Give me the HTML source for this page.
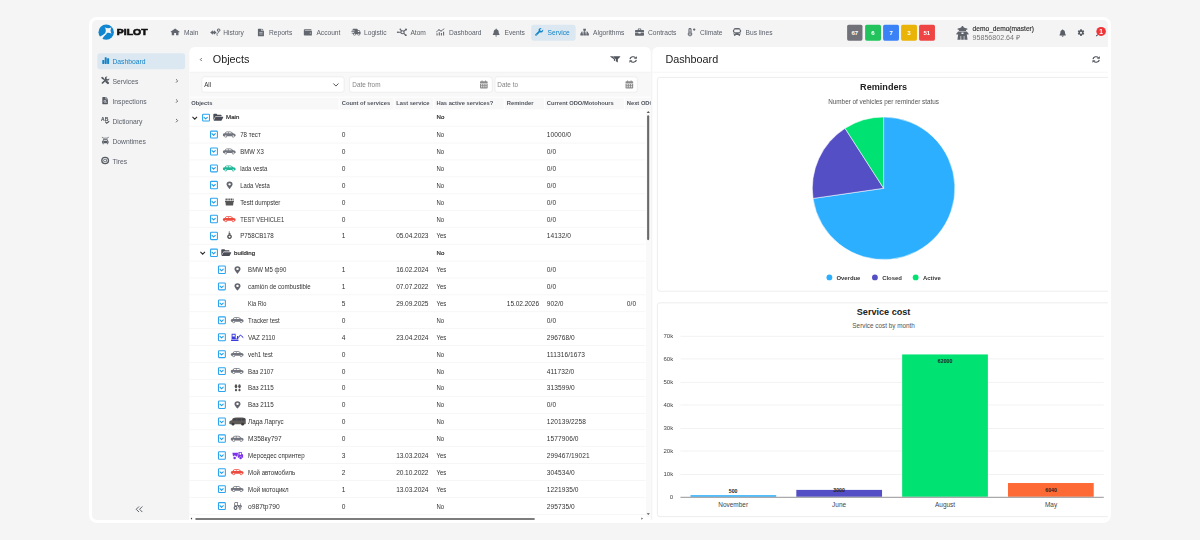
<!DOCTYPE html>
<html lang="en"><head><meta charset="utf-8"><title>PILOT - Service</title>
<style>
html,body{margin:0;padding:0}
body{width:1200px;height:540px;overflow:hidden;position:relative;background:#f5f5f5;font-family:"Liberation Sans",sans-serif;color:#333}
#frame{position:absolute;left:89px;top:17px;width:1022px;height:506px;background:#fff;border-radius:8px}
#inner{position:absolute;left:92px;top:20px;width:1016px;height:500px;background:#f4f4f4;border-radius:5px;overflow:hidden}
#app{position:relative;width:1920px;height:944px;transform:scale(0.529167);transform-origin:0 0}
.a{position:absolute}
.t{position:absolute;white-space:nowrap;line-height:1}
svg{position:absolute;overflow:visible}
.nav{font-size:12.55px;color:#555b66}
.side{font-size:12.8px;color:#5a5f69}
.panel{position:absolute;background:#fff;border-radius:10px 10px 0 0}
.ttl{font-size:20.4px;color:#222}
.hd{font-size:10.9px;font-weight:bold;color:#50555d}
.c{font-size:12.4px;color:#333}
.n{letter-spacing:0.15px}
.row{position:absolute;left:0;height:1px;background:#efefef}
.cb{position:absolute;border:2px solid #2aa4f0;border-radius:2.5px;background:#fff;box-sizing:border-box}
.inp{position:absolute;background:#fff;border:1px solid #e3e3e3;border-radius:5px;box-sizing:border-box}
.card{position:absolute;background:#fff;border:1px solid #dcdcdc;border-radius:5px;box-sizing:border-box}
.ct{font-weight:bold;color:#222;text-align:center}
.cs{color:#555;text-align:center}
</style></head><body>
<div id="frame"></div><div id="inner"><div id="app">
<header>
<svg class="a" style="left:12.47px;top:7.75px" width="29.67" height="30.05" viewBox="0 0 30 30"><circle cx="15" cy="15" r="14.7" fill="#0f86cf"/><path d="M14.6 15.8 C11 19.2 6.6 22 1.6 24 L7 29.4 C8.8 24.8 12 21 16.2 18 Z" fill="#f4f4f4"/><path d="M12.3 5.6 Q18.8 9.6 25.3 5.6 Q21.4 11.8 25.3 18.1 Q18.8 14.2 12.3 18.1 Q16.2 11.8 12.3 5.6 Z" fill="#f4f4f4"/></svg>
<div class="t" style="left:47.43px;top:23.24px;font-size:17.6px;font-weight:bold;color:#111;-webkit-text-stroke:1.2px #111;transform:translateY(-50%) scaleX(1.12);transform-origin:0 50%">PILOT</div>
<div class="a" style="left:829.61px;top:8.88px;width:84.66px;height:30.24px;background:#dce8f1;border-radius:5px"></div>
<svg class="a" style="left:148.16px;top:15.12px" width="18.14" height="15.31" viewBox="0 0 16 16" fill="#62666f" color="#62666f" preserveAspectRatio="none"><path d="M8 1 L15.6 7.7 L14.6 8.8 L13.6 8 V14.5 H9.6 V10.2 H6.4 V14.5 H2.4 V8 L1.4 8.8 L0.4 7.7 Z"/></svg>
<div class="t nav" style="left:173.86px;top:24.57px;transform:translateY(-50%);transform-origin:0 50%;color:#5b606a;">Main</div>
<svg class="a" style="left:222.99px;top:15.5px" width="20.03" height="14.17" viewBox="0 0 20 16" fill="#62666f" color="#62666f" preserveAspectRatio="none"><path d="M0.3 8.6 L5.4 3.8 V6.6 H7.4 V3.8 L12.4 8.6 L7.4 13.4 V10.6 H5.4 V13.4 Z"/><path d="M16.4 0.3 a3.4 3.4 0 1 1 -0.1 0Z M16.4 2.3 a1.4 1.4 0 1 0 0.1 0Z" fill-rule="evenodd"/><path d="M16.2 6.6 C17.4 9.6 15.6 11 13.6 11.8 L14.6 15.6 L13 15.6 L11.8 11 C14 10.2 15.4 9.2 14.8 6.8Z"/></svg>
<div class="t nav" style="left:247.94px;top:24.57px;transform:translateY(-50%);transform-origin:0 50%;color:#5b606a;">History</div>
<svg class="a" style="left:312.94px;top:15.5px" width="12.47" height="15.12" viewBox="0 0 12 16" fill="#62666f" color="#62666f" preserveAspectRatio="none"><path d="M1.5 0.5 H7 V5 H11.5 V14.5 a1 1 0 0 1 -1 1 H1.5 a1 1 0 0 1 -1 -1 V1.5 a1 1 0 0 1 1 -1 Z M8 0.5 L11.5 4 H8 Z M3 8 h6 v1.2 h-6z M3 10.6 h6 v1.2 h-6z" fill-rule="evenodd"/></svg>
<div class="t nav" style="left:334.49px;top:24.57px;transform:translateY(-50%);transform-origin:0 50%;color:#5b606a;">Reports</div>
<svg class="a" style="left:399.87px;top:16.82px" width="15.87" height="12.66" viewBox="0 0 16 14" fill="#62666f" color="#62666f" preserveAspectRatio="none"><path d="M2 0.5 H14 a1 1 0 0 1 1 1 V2.2 H2.6 a0.6 0.6 0 0 0 0 1.2 H14.5 a1.2 1.2 0 0 1 1.2 1.2 V12.3 a1.2 1.2 0 0 1 -1.2 1.2 H2 a1.7 1.7 0 0 1 -1.7 -1.7 V2.2 A1.7 1.7 0 0 1 2 0.5 Z M12.6 7.4 a1.1 1.1 0 1 0 0 2.2 a1.1 1.1 0 0 0 0 -2.2Z" fill-rule="evenodd"/></svg>
<div class="t nav" style="left:424.06px;top:24.57px;transform:translateY(-50%);transform-origin:0 50%;color:#5b606a;">Account</div>
<svg class="a" style="left:490.2px;top:15.87px" width="17.76" height="14.17" viewBox="0 0 20 16" fill="#62666f" color="#62666f" preserveAspectRatio="none"><path d="M3.4 0.6 H12.4 a1.2 1.2 0 0 1 1.2 1.2 V3.4 H16.2 c0.5 0 0.9 0.2 1.2 0.6 L19.4 7 c0.2 0.3 0.4 0.7 0.4 1.1 V12.4 H18.6 a2.7 2.7 0 0 1 -5.4 0 H9.6 a2.7 2.7 0 0 1 -5.4 0 H3.4 V10.6 H0.8 V9 H6 V7.6 H0.2 V6 H7 V4.6 H1.2 V3 H3.4 Z M14 5 V7.6 H18 L16 5 Z M6.9 11 a1.4 1.4 0 1 0 0 2.8 a1.4 1.4 0 0 0 0 -2.8Z M15.9 11 a1.4 1.4 0 1 0 0 2.8 a1.4 1.4 0 0 0 0 -2.8Z" fill-rule="evenodd"/></svg>
<div class="t nav" style="left:514.02px;top:24.57px;transform:translateY(-50%);transform-origin:0 50%;color:#5b606a;">Logistic</div>
<svg class="a" style="left:576.38px;top:15.5px" width="20.03" height="14.36" viewBox="0 0 20 16" fill="#62666f" color="#62666f" preserveAspectRatio="none"><g stroke="currentColor" stroke-width="2.2" fill="none"><path d="M1.6 8 H7.6 M13 6 L17 2.4 M13 10.4 L16.6 14 M9 5.4 L7 2.4"/><circle cx="10.8" cy="8.1" r="3.1"/></g><circle cx="1.8" cy="8" r="1.7"/><circle cx="17.4" cy="2.2" r="2"/><circle cx="17" cy="14.2" r="1.8"/><circle cx="6.6" cy="1.9" r="1.6"/></svg>
<div class="t nav" style="left:601.7px;top:24.57px;transform:translateY(-50%);transform-origin:0 50%;color:#5b606a;">Atom</div>
<svg class="a" style="left:650.08px;top:16.06px" width="16.25" height="13.61" viewBox="0 0 16 16" fill="#62666f" color="#62666f" preserveAspectRatio="none"><path d="M1 10.4 h2 v5.2 H1z M5.2 8.4 h2 v7.2 H5.2z M9.2 10 h2 v5.6 H9.2z M13.2 7.4 h2 v8.2 H13.2z"/><path d="M1 7.4 L5.6 3 L9.4 5.6 L15 1" fill="none" stroke="currentColor" stroke-width="1.7" stroke-linecap="round" stroke-linejoin="round"/><circle cx="5.6" cy="3" r="1.3"/><circle cx="9.6" cy="5.6" r="1.3"/></svg>
<div class="t nav" style="left:674.65px;top:24.57px;transform:translateY(-50%);transform-origin:0 50%;color:#5b606a;">Dashboard</div>
<svg class="a" style="left:756.66px;top:15.5px" width="13.61" height="15.12" viewBox="0 0 14 16" fill="#62666f" color="#62666f" preserveAspectRatio="none"><path d="M7 0.3 a1 1 0 0 1 1 1 V1.9 c2.3 0.5 3.8 2.4 3.8 4.8 c0 2.8 0.8 4 1.6 4.9 c0.5 0.6 0.1 1.6 -0.8 1.6 H1.4 c-0.9 0 -1.3 -1 -0.8 -1.6 c0.8 -0.9 1.6 -2.1 1.6 -4.9 c0 -2.4 1.5 -4.3 3.8 -4.8 V1.3 a1 1 0 0 1 1 -1 Z M5 14 h4 a2 2 0 0 1 -4 0Z"/></svg>
<div class="t nav" style="left:779.72px;top:24.57px;transform:translateY(-50%);transform-origin:0 50%;color:#5b606a;">Events</div>
<svg class="a" style="left:836.79px;top:15.12px" width="15.87" height="15.31" viewBox="0 0 16 16" fill="#1283c9" color="#1283c9" preserveAspectRatio="none"><path d="M15.8 3.6 a4.6 4.6 0 0 1 -6.3 5 L3.3 14.9 a1.7 1.7 0 0 1 -2.4 -2.4 L7.2 6.3 a4.6 4.6 0 0 1 5.1 -6.2 c0.3 0.05 0.35 0.4 0.15 0.6 L10 3.2 L10.4 5.5 L12.7 5.9 L15.2 3.4 c0.2 -0.2 0.55 -0.1 0.6 0.2 Z M2.2 13.2 a0.7 0.7 0 1 0 1.4 0 a0.7 0.7 0 0 0 -1.4 0Z" fill-rule="evenodd"/></svg>
<div class="t nav" style="left:860.98px;top:24.57px;transform:translateY(-50%);transform-origin:0 50%;color:#1283c9;">Service</div>
<svg class="a" style="left:922.2px;top:15.87px" width="17.76" height="13.98" viewBox="0 0 18 16" fill="#62666f" color="#62666f" preserveAspectRatio="none"><path d="M6.5 0.5 h5 v4.6 h-1.8 v2 H15.6 v3.3 h1.6 v4.6 h-5 v-4.6 h1.6 v-1.6 H9.9 v1.6 h1.6 v4.6 h-5 v-4.6 h1.6 v-1.6 H4.3 v1.6 h1.6 v4.6 h-5 v-4.6 h1.6 V7.1 H8.3 v-2 H6.5z"/></svg>
<div class="t nav" style="left:946.77px;top:24.57px;transform:translateY(-50%);transform-origin:0 50%;color:#5b606a;">Algorithms</div>
<svg class="a" style="left:1026.14px;top:15.87px" width="17.39" height="13.98" viewBox="0 0 16 15" fill="#62666f" color="#62666f" preserveAspectRatio="none"><path d="M5 1.5 a1.3 1.3 0 0 1 1.3 -1.3 h3.4 A1.3 1.3 0 0 1 11 1.5 V3 h3.6 A1.2 1.2 0 0 1 15.8 4.2 V8 H10 v-1 H6 v1 H0.2 V4.2 A1.2 1.2 0 0 1 1.4 3 H5 Z M6.6 1.8 V3 h2.8 V1.8 Z M0.2 9.2 H6 v1.2 h4 V9.2 h5.8 v4.2 a1.2 1.2 0 0 1 -1.2 1.2 H1.4 A1.2 1.2 0 0 1 0.2 13.4 Z" fill-rule="evenodd"/></svg>
<div class="t nav" style="left:1050.71px;top:24.57px;transform:translateY(-50%);transform-origin:0 50%;color:#5b606a;">Contracts</div>
<svg class="a" style="left:1125.17px;top:15.12px" width="16.25" height="15.5" viewBox="0 0 16 16" fill="#62666f" color="#62666f" preserveAspectRatio="none"><path d="M5 0.3 a2.9 2.9 0 0 1 2.9 2.9 V8.8 a4.3 4.3 0 1 1 -5.8 0 V3.2 A2.9 2.9 0 0 1 5 0.3 Z M5 2.2 a0.9 0.9 0 0 0 -0.9 0.9 V9.8 a2.4 2.4 0 1 0 1.8 0 V3.1 A0.9 0.9 0 0 0 5 2.2 Z" fill-rule="evenodd"/><circle cx="5" cy="12" r="1.5"/><path d="M4.4 6.5 h1.2 v5 h-1.2z"/><circle cx="12.8" cy="3.2" r="2.2"/></svg>
<div class="t nav" style="left:1148.98px;top:24.57px;transform:translateY(-50%);transform-origin:0 50%;color:#5b606a;">Climate</div>
<svg class="a" style="left:1211.34px;top:15.12px" width="15.87" height="15.5" viewBox="0 0 16 16" fill="#62666f" color="#62666f" preserveAspectRatio="none"><path d="M8 0.3 c4 0 6.6 0.9 6.6 2.6 V4 h0.6 a0.6 0.6 0 0 1 0.6 0.6 v2.6 a0.6 0.6 0 0 1 -0.6 0.6 H14.6 V11.6 a1.6 1.6 0 0 1 -1 1.5 V14.8 a0.9 0.9 0 0 1 -0.9 0.9 h-0.9 a0.9 0.9 0 0 1 -0.9 -0.9 V13.6 H5.1 V14.8 a0.9 0.9 0 0 1 -0.9 0.9 H3.3 a0.9 0.9 0 0 1 -0.9 -0.9 V13.1 A1.6 1.6 0 0 1 1.4 11.6 V7.8 H0.8 A0.6 0.6 0 0 1 0.2 7.2 V4.6 A0.6 0.6 0 0 1 0.8 4 H1.4 V2.9 C1.4 1.2 4 0.3 8 0.3 Z M3.6 3.2 a0.9 0.9 0 0 0 -0.9 0.9 V7.4 a0.9 0.9 0 0 0 0.9 0.9 H12.4 a0.9 0.9 0 0 0 0.9 -0.9 V4.1 a0.9 0.9 0 0 0 -0.9 -0.9 Z M3.8 9.9 a1 1 0 1 0 0 2 a1 1 0 0 0 0 -2Z M12.2 9.9 a1 1 0 1 0 0 2 a1 1 0 0 0 0 -2Z" fill-rule="evenodd"/></svg>
<div class="t nav" style="left:1235.15px;top:24.57px;transform:translateY(-50%);transform-origin:0 50%;color:#5b606a;">Bus lines</div>
<div class="a" style="left:1426.58px;top:8.88px;width:29.86px;height:30.24px;background:#71717a;border-radius:3px;color:#fff;font-size:11.6px;font-weight:bold;text-align:center;line-height:30.24px">67</div>
<div class="a" style="left:1460.98px;top:8.88px;width:29.86px;height:30.24px;background:#22c35d;border-radius:3px;color:#fff;font-size:11.6px;font-weight:bold;text-align:center;line-height:30.24px">6</div>
<div class="a" style="left:1495.18px;top:8.88px;width:29.86px;height:30.24px;background:#3b82f6;border-radius:3px;color:#fff;font-size:11.6px;font-weight:bold;text-align:center;line-height:30.24px">7</div>
<div class="a" style="left:1529.01px;top:8.88px;width:29.86px;height:30.24px;background:#eab308;border-radius:3px;color:#fff;font-size:11.6px;font-weight:bold;text-align:center;line-height:30.24px">3</div>
<div class="a" style="left:1562.65px;top:8.88px;width:29.86px;height:30.24px;background:#ef4444;border-radius:3px;color:#fff;font-size:11.6px;font-weight:bold;text-align:center;line-height:30.24px">51</div>
<svg class="a" style="left:1632.94px;top:10.77px" width="24.0" height="26.65" viewBox="0 0 20 22" fill="#5f636c" color="#5f636c" preserveAspectRatio="none"><path d="M8.8 0.3 h2.4 V1.8 C12.6 3 15 3.8 17.6 4 V6 H15.6 V8.2 H4.4 V6 H2.4 V4 C5 3.8 7.4 3 8.8 1.8 Z"/><path d="M3.2 8.8 H16.8 L19.7 12.4 V13.4 H16.8 L18 21.7 H13 V16 H12 V21.7 H8 V16 H7 V21.7 H2 L3.2 13.4 H0.3 V12.4 Z M8.4 10.6 V12.6 H11.6 V10.6 Z" fill-rule="evenodd"/></svg>
<div class="t " style="left:1664.13px;top:16.72px;transform:translateY(-50%);transform-origin:0 50%;font-size:12.5px;color:#2b2b2b;-webkit-text-stroke:0.25px #2b2b2b">demo_demo(master)</div>
<div class="t " style="left:1664.13px;top:33.26px;transform:translateY(-50%);transform-origin:0 50%;font-size:13.4px;color:#777">95856802.64 ₽</div>
<svg class="a" style="left:1828.35px;top:16.82px" width="12.66" height="14.74" viewBox="0 0 14 16" fill="#5a5e67" color="#5a5e67" preserveAspectRatio="none"><path d="M7 0.3 a1 1 0 0 1 1 1 V1.9 c2.3 0.5 3.8 2.4 3.8 4.8 c0 2.8 0.8 4 1.6 4.9 c0.5 0.6 0.1 1.6 -0.8 1.6 H1.4 c-0.9 0 -1.3 -1 -0.8 -1.6 c0.8 -0.9 1.6 -2.1 1.6 -4.9 c0 -2.4 1.5 -4.3 3.8 -4.8 V1.3 a1 1 0 0 1 1 -1 Z M5 14 h4 a2 2 0 0 1 -4 0Z"/></svg>
<svg class="a" style="left:1861.8px;top:16.63px" width="13.98" height="14.36" viewBox="0 0 16 16" fill="#555962" color="#555962" preserveAspectRatio="none"><path d="M6.4 0.3 h3.2 l0.45 2.1 a5.8 5.8 0 0 1 1.3 0.75 l2.05 -0.7 l1.6 2.8 l-1.6 1.4 a5.8 5.8 0 0 1 0 1.5 l1.6 1.4 l-1.6 2.8 l-2.05 -0.7 a5.8 5.8 0 0 1 -1.3 0.75 l-0.45 2.1 H6.4 l-0.45 -2.1 a5.8 5.8 0 0 1 -1.3 -0.75 l-2.05 0.7 l-1.6 -2.8 l1.6 -1.4 a5.8 5.8 0 0 1 0 -1.5 L1 5.25 l1.6 -2.8 l2.05 0.7 a5.8 5.8 0 0 1 1.3 -0.75 Z M8 5.7 a2.3 2.3 0 1 0 0 4.6 a2.3 2.3 0 0 0 0 -4.6Z" fill-rule="evenodd"/></svg>
<div class="a" style="left:1898.46px;top:12.85px;width:17.39px;height:17.39px;border-radius:50%;background:#ee353a;color:#fff;font-size:12.5px;font-weight:bold;text-align:center;line-height:20.03px">1</div>
<div class="a" style="left:1898.08px;top:26.83px;width:2.27px;height:4.16px;background:#4a4f57;transform:rotate(45deg)"></div>
</header>
<aside>
<div class="a" style="left:10.02px;top:62.74px;width:165.54px;height:29.86px;background:#dce8f1;border-radius:5px"></div>
<svg class="a" style="left:18.71px;top:69.54px" width="13.8" height="13.42" viewBox="0 0 16 16" fill="#1283c9" color="#1283c9" preserveAspectRatio="none"><path d="M1.4 6.8 h2.6 a0.9 0.9 0 0 1 0.9 0.9 V14.6 a0.9 0.9 0 0 1 -0.9 0.9 h-2.6 A0.9 0.9 0 0 1 0.5 14.6 V7.7 a0.9 0.9 0 0 1 0.9 -0.9Z M6.7 0.5 h2.6 a0.9 0.9 0 0 1 0.9 0.9 V14.6 a0.9 0.9 0 0 1 -0.9 0.9 h-2.6 A0.9 0.9 0 0 1 5.8 14.6 V1.4 a0.9 0.9 0 0 1 0.9 -0.9Z M12 2.6 h2.6 a0.9 0.9 0 0 1 0.9 0.9 V14.6 a0.9 0.9 0 0 1 -0.9 0.9 h-2.6 a0.9 0.9 0 0 1 -0.9 -0.9 V3.5 a0.9 0.9 0 0 1 0.9 -0.9Z"/></svg>
<div class="t side" style="left:38.55px;top:79.09px;transform:translateY(-50%);transform-origin:0 50%;color:#1283c9;">Dashboard</div>
<svg class="a" style="left:17.01px;top:107.15px" width="15.69" height="14.55" viewBox="0 0 16 16" fill="#555a63" color="#555a63" preserveAspectRatio="none"><g stroke="currentColor" stroke-linecap="round" fill="none"><path d="M3.4 3.4 L9.6 9.6" stroke-width="2.2"/><path d="M10.6 10.6 L13.4 13.4" stroke-width="4.4"/><path d="M2.8 13.2 L10 6" stroke-width="3.4"/></g><path d="M0.4 1.6 L2.4 0.2 L5.6 2.8 L5.2 5.2 L2.8 5.6 L0.2 2.4Z"/><path d="M15.9 3.6 a4.4 4.4 0 1 1 -3.5 -3.5 L10.4 2.2 L11 5 L13.8 5.6 Z"/></svg>
<div class="t side" style="left:38.55px;top:117.26px;transform:translateY(-50%);transform-origin:0 50%;color:#5b606a;">Services</div>
<svg class="a" style="left:157.8px;top:110.74px" width="4.72" height="8.31" viewBox="0 0 6 10" fill="none" stroke="#444" stroke-width="1.9"><path d="M1 1 L5 5 L1 9"/></svg>
<svg class="a" style="left:19.09px;top:144.94px" width="11.53" height="14.55" viewBox="0 0 12 16" fill="#555a63" color="#555a63" preserveAspectRatio="none"><path d="M1.5 0.5 H7 V5 H11.5 V14.5 a1 1 0 0 1 -1 1 H1.5 a1 1 0 0 1 -1 -1 V1.5 a1 1 0 0 1 1 -1 Z M8 0.5 L11.5 4 H8 Z M5.6 6.8 a2.6 2.6 0 1 0 1.3 4.9 l1.3 1.3 l0.9 -0.9 l-1.3 -1.3 A2.6 2.6 0 0 0 5.6 6.8 Z M5.6 8 a1.4 1.4 0 1 1 0 2.8 a1.4 1.4 0 0 1 0 -2.8Z" fill-rule="evenodd"/></svg>
<div class="t side" style="left:38.55px;top:155.24px;transform:translateY(-50%);transform-origin:0 50%;color:#5b606a;">Inspections</div>
<svg class="a" style="left:157.8px;top:148.72px" width="4.72" height="8.31" viewBox="0 0 6 10" fill="none" stroke="#444" stroke-width="1.9"><path d="M1 1 L5 5 L1 9"/></svg>
<div class="t" style="left:17.2px;top:181.61px;font-size:9.4px;font-weight:bold;color:#555a63;letter-spacing:0.2px;-webkit-text-stroke:0.3px">AB</div>
<svg class="a" style="left:24.38px;top:189.73px" width="9.45" height="7.18" viewBox="0 0 10 6" fill="none" stroke="#555a63" stroke-width="2.3"><path d="M1 1.5 L4 4.6 L9 0.6"/></svg>
<div class="t side" style="left:38.55px;top:192.66px;transform:translateY(-50%);transform-origin:0 50%;color:#5b606a;">Dictionary</div>
<svg class="a" style="left:157.8px;top:186.14px" width="4.72" height="8.31" viewBox="0 0 6 10" fill="none" stroke="#444" stroke-width="1.9"><path d="M1 1 L5 5 L1 9"/></svg>
<svg class="a" style="left:18.14px;top:219.97px" width="14.36" height="15.69" viewBox="0 0 16 16" fill="#555a63" color="#555a63" preserveAspectRatio="none"><path d="M1 0.5 L4 2.5 H12 L15 0.5 L15.6 1.4 L13.2 3.2 V4 H2.8 V3.2 L0.4 1.4 Z"/><path d="M4.6 5.2 H11.4 a1.4 1.4 0 0 1 1.3 0.9 L13.6 8.5 a1.6 1.6 0 0 1 1.2 1.5 V13 h-1.4 v1.6 a0.8 0.8 0 0 1 -1.6 0 V13 H4.2 v1.6 a0.8 0.8 0 0 1 -1.6 0 V13 H1.2 V10 a1.6 1.6 0 0 1 1.2 -1.5 L3.3 6.1 A1.4 1.4 0 0 1 4.6 5.2 Z M4.8 6.6 L4.1 8.4 H11.9 L11.2 6.6 Z M3.8 9.8 a0.9 0.9 0 1 0 0 1.8 a0.9 0.9 0 0 0 0 -1.8Z M12.2 9.8 a0.9 0.9 0 1 0 0 1.8 a0.9 0.9 0 0 0 0 -1.8Z" fill-rule="evenodd"/></svg>
<div class="t side" style="left:38.55px;top:230.46px;transform:translateY(-50%);transform-origin:0 50%;color:#5b606a;">Downtimes</div>
<svg class="a" style="left:17.39px;top:257.76px" width="15.69" height="14.93" viewBox="0 0 16 16" fill="#555a63" color="#555a63" preserveAspectRatio="none"><path d="M8 0.3 a7.7 7.7 0 1 1 0 15.4 a7.7 7.7 0 0 1 0 -15.4 Z M8 3 a5 5 0 1 0 0 10 a5 5 0 0 0 0 -10 Z M8 4.3 a3.7 3.7 0 1 1 0 7.4 a3.7 3.7 0 0 1 0 -7.4Z M8 5.8 a2.2 2.2 0 1 0 0 4.4 a2.2 2.2 0 0 0 0 -4.4Z" fill-rule="evenodd"/></svg>
<div class="t side" style="left:38.55px;top:268.44px;transform:translateY(-50%);transform-origin:0 50%;color:#5b606a;">Tires</div>
<svg class="a" style="left:82.2px;top:918.43px" width="14.74" height="13.23" viewBox="0 0 14 12" fill="none" stroke="#4a4f57" stroke-width="1.6"><path d="M6.5 1 L1.5 6 L6.5 11 M12.5 1 L7.5 6 L12.5 11"/></svg>
</aside>
<main>
<section>
<div class="panel" style="left:183.5px;top:50.83px;width:872.13px;height:894.43px;overflow:hidden">
</div>
<div class="a" style="left:183.5px;top:98.27px;width:872.13px;height:48.38px;background:#f8f8f9;border-top:1px solid #ececec"></div>
<svg class="a" style="left:204.47px;top:70.68px" width="4.16" height="7.56" viewBox="0 0 6 10" fill="none" stroke="#3a3d44" stroke-width="2.1"><path d="M5 1 L1 5 L5 9"/></svg>
<div class="t ttl" style="left:228.28px;top:74.83px;transform:translateY(-50%);transform-origin:0 50%;">Objects</div>
<svg class="a" style="left:978.52px;top:68.03px" width="19.65" height="12.66" viewBox="0 0 19 14" fill="#4f535b" color="#4f535b" preserveAspectRatio="none"><path d="M0.8 0.4 h4.4 L9.4 5.8 V11 L7 9.4 V6.6 L0.4 1.4 C0 1 0.3 0.4 0.8 0.4Z"/><path d="M6.4 0.4 H18.2 c0.6 0 0.9 0.7 0.5 1.1 L14.2 6.9 V13.4 L10.6 10.8 V6.9 L5.9 1.5 C5.5 1.1 5.8 0.4 6.4 0.4Z" stroke="#fff" stroke-width="1.1" paint-order="stroke"/></svg>
<svg class="a" style="left:1014.99px;top:67.84px" width="15.31" height="13.23" viewBox="0 0 16 16" fill="#4f535b" color="#4f535b" preserveAspectRatio="none"><g fill="none" stroke="currentColor" stroke-width="2.4"><path d="M1.8 7.2 A6.2 6.2 0 0 1 12.6 3.8"/><path d="M14.2 8.8 A6.2 6.2 0 0 1 3.4 12.2"/></g><path d="M15.4 0.4 V6.4 H9.4 Z"/><path d="M0.6 15.6 V9.6 H6.6 Z"/></svg>
<div class="inp" style="left:207.12px;top:107.34px;width:269.86px;height:29.48px"></div>
<div class="inp" style="left:486.05px;top:107.34px;width:270.61px;height:29.48px"></div>
<div class="inp" style="left:760.82px;top:107.34px;width:270.24px;height:29.48px"></div>
<div class="t c" style="left:212.41px;top:123.4px;transform:translateY(-50%) scaleX(0.91);transform-origin:0 50%;font-size:12.9px;color:#333">All</div>
<svg class="a" style="left:455.43px;top:119.06px" width="11.91" height="6.8" viewBox="0 0 12 7" fill="none" stroke="#444" stroke-width="1.8"><path d="M1 1 L6 6 L11 1"/></svg>
<div class="t c" style="left:492.09px;top:123.4px;transform:translateY(-50%) scaleX(0.91);transform-origin:0 50%;font-size:13.3px;color:#838383">Date from</div>
<div class="t c" style="left:766.49px;top:123.4px;transform:translateY(-50%) scaleX(0.91);transform-origin:0 50%;font-size:13.3px;color:#838383">Date to</div>
<svg class="a" style="left:733.04px;top:114.33px" width="14.93" height="15.87" viewBox="0 0 14 16" fill="#8c8c8c" color="#8c8c8c" preserveAspectRatio="none"><path d="M3 0.4 h1.8 V2 h4.4 V0.4 H11 V2 h1.4 A1.4 1.4 0 0 1 13.8 3.4 V5 H0.2 V3.4 A1.4 1.4 0 0 1 1.6 2 H3 Z M0.2 6 H13.8 V14.2 a1.4 1.4 0 0 1 -1.4 1.4 H1.6 A1.4 1.4 0 0 1 0.2 14.2 Z M2.2 7.6 v2 h2 v-2 Z M6 7.6 v2 h2 v-2 Z M9.8 7.6 v2 h2 v-2 Z M2.2 11.2 v2 h2 v-2 Z M6 11.2 v2 h2 v-2 Z M9.8 11.2 v2 h2 v-2 Z" fill-rule="evenodd"/></svg>
<svg class="a" style="left:1007.81px;top:114.33px" width="14.93" height="15.87" viewBox="0 0 14 16" fill="#8c8c8c" color="#8c8c8c" preserveAspectRatio="none"><path d="M3 0.4 h1.8 V2 h4.4 V0.4 H11 V2 h1.4 A1.4 1.4 0 0 1 13.8 3.4 V5 H0.2 V3.4 A1.4 1.4 0 0 1 1.6 2 H3 Z M0.2 6 H13.8 V14.2 a1.4 1.4 0 0 1 -1.4 1.4 H1.6 A1.4 1.4 0 0 1 0.2 14.2 Z M2.2 7.6 v2 h2 v-2 Z M6 7.6 v2 h2 v-2 Z M9.8 7.6 v2 h2 v-2 Z M2.2 11.2 v2 h2 v-2 Z M6 11.2 v2 h2 v-2 Z M9.8 11.2 v2 h2 v-2 Z" fill-rule="evenodd"/></svg>
<div class="a" style="left:183.5px;top:144.94px;width:872.13px;height:1.6px;background:#fff"></div>
<div class="a" style="left:183.5px;top:146.65px;width:872.13px;height:22.3px;background:#f8f8f9"></div>
<div class="a" style="left:183.5px;top:146.65px;width:872.13px;height:22.3px;overflow:hidden">
<div class="t hd" style="left:3.97px;top:10.96px;transform:translateY(-50%)">Objects</div>
<div class="t hd" style="left:288.57px;top:10.96px;transform:translateY(-50%)">Count of services</div>
<div class="t hd" style="left:391.37px;top:10.96px;transform:translateY(-50%)">Last service</div>
<div class="t hd" style="left:467.53px;top:10.96px;transform:translateY(-50%)">Has active services?</div>
<div class="t hd" style="left:600.38px;top:10.96px;transform:translateY(-50%)">Reminder</div>
<div class="t hd" style="left:675.97px;top:10.96px;transform:translateY(-50%)">Current ODO/Motohours</div>
<div class="t hd" style="left:827.15px;top:10.96px;transform:translateY(-50%)">Next ODO/Motohours</div>
<div class="a" style="left:282.14px;top:0;width:2px;height:100%;background:#fff"></div>
<div class="a" style="left:386.08px;top:0;width:2px;height:100%;background:#fff"></div>
<div class="a" style="left:461.67px;top:0;width:2px;height:100%;background:#fff"></div>
<div class="a" style="left:594.52px;top:0;width:2px;height:100%;background:#fff"></div>
<div class="a" style="left:670.68px;top:0;width:2px;height:100%;background:#fff"></div>
<div class="a" style="left:821.86px;top:0;width:2px;height:100%;background:#fff"></div>
</div>
<div class="row" style="left:183.5px;top:199.89px;width:862.68px"></div>
<svg class="a" style="left:189.17px;top:181.79px" width="10.39" height="6.61" viewBox="0 0 12 7" fill="none" stroke="#2e2e2e" stroke-width="2.4"><path d="M1 1 L6 6 L11 1"/></svg>
<svg class="a" style="left:229.04px;top:177.25px" width="19.46" height="13.42" viewBox="0 1.3 20 13.4" fill="#4a4d55" color="#4a4d55" preserveAspectRatio="none"><path d="M1.6 1.5 H6.5 L8.3 3.3 H15 a1.3 1.3 0 0 1 1.3 1.3 V6 H5.4 a1.8 1.8 0 0 0 -1.6 1 L0.3 13.6 V2.8 A1.3 1.3 0 0 1 1.6 1.5 Z"/><path d="M5.4 7.2 H19 a0.7 0.7 0 0 1 0.6 1 L16.6 13.9 a1.2 1.2 0 0 1 -1 0.6 H0.9 L4.4 7.8 a1.1 1.1 0 0 1 1 -0.6Z"/></svg>
<div class="cb" style="left:207.5px;top:176.78px;width:15.31px;height:15.5px"></div>
<svg class="a" style="left:211.18px;top:182.54px" width="7.75" height="4.72" viewBox="0 0 10 6" fill="none" stroke="#1e9bec" stroke-width="2.6" stroke-linecap="round" stroke-linejoin="round"><path d="M1 1 L5 5 L9 1"/></svg>
<div class="t c x" style="left:253.42px;top:184.05px;transform:translateY(-50%) scaleX(1.0);transform-origin:0 50%;font-size:11.5px;-webkit-text-stroke:0.4px #2e2e2e;">Main</div>
<div class="t c" style="left:651.02px;top:184.05px;transform:translateY(-50%) scaleX(1.0);transform-origin:0 50%;font-size:11.5px;-webkit-text-stroke:0.4px #2e2e2e;">No</div>
<div class="row" style="left:183.5px;top:231.81px;width:862.68px"></div>
<svg class="a" style="left:246.99px;top:210.11px" width="24.76" height="12.09" viewBox="0 0 26 12" fill="#72757d" color="#72757d" preserveAspectRatio="none"><path d="M8.2 0.8 H15 c1.4 0 2.6 0.5 3.6 1.5 L20.6 4.2 L23.4 4.7 c1.3 0.3 2.2 1.3 2.2 2.6 V8.6 a0.8 0.8 0 0 1 -0.8 0.8 H23.6 a2.7 2.7 0 0 1 -5.4 0 H8.8 a2.7 2.7 0 0 1 -5.4 0 H1.8 A1.4 1.4 0 0 1 0.4 8 V6.4 c0 -0.9 0.6 -1.7 1.5 -1.9 L4 4.1 L5.6 2.1 C6.3 1.3 7.2 0.8 8.2 0.8 Z M8.4 2.2 c-0.6 0 -1.1 0.3 -1.5 0.7 L5.8 4.2 H10.4 V2.2 Z M11.8 2.2 V4.2 H18.4 L17.5 3.2 C16.9 2.6 16 2.2 15.1 2.2 Z M6.1 7.8 a1.5 1.5 0 1 0 0 3 a1.5 1.5 0 0 0 0 -3Z M20.9 7.8 a1.5 1.5 0 1 0 0 3 a1.5 1.5 0 0 0 0 -3Z" fill-rule="evenodd"/></svg>
<div class="cb" style="left:222.61px;top:208.7px;width:15.31px;height:15.5px"></div>
<svg class="a" style="left:226.3px;top:214.46px" width="7.75" height="4.72" viewBox="0 0 10 6" fill="none" stroke="#1e9bec" stroke-width="2.6" stroke-linecap="round" stroke-linejoin="round"><path d="M1 1 L5 5 L9 1"/></svg>
<div class="t c x" style="left:279.87px;top:217.67px;transform:translateY(-50%) scaleX(0.937);transform-origin:0 50%;">78 тест</div>
<div class="t c n" style="left:472.06px;top:217.67px;transform:translateY(-50%);transform-origin:0 50%;letter-spacing:0.15px;">0</div>
<div class="t c" style="left:651.02px;top:217.67px;transform:translateY(-50%) scaleX(0.91);transform-origin:0 50%;">No</div>
<div class="t c n" style="left:859.46px;top:217.67px;transform:translateY(-50%);transform-origin:0 50%;letter-spacing:0.15px;">10000/0</div>
<div class="row" style="left:183.5px;top:263.73px;width:862.68px"></div>
<svg class="a" style="left:246.99px;top:242.03px" width="24.76" height="12.09" viewBox="0 0 26 12" fill="#72757d" color="#72757d" preserveAspectRatio="none"><path d="M8.2 0.8 H15 c1.4 0 2.6 0.5 3.6 1.5 L20.6 4.2 L23.4 4.7 c1.3 0.3 2.2 1.3 2.2 2.6 V8.6 a0.8 0.8 0 0 1 -0.8 0.8 H23.6 a2.7 2.7 0 0 1 -5.4 0 H8.8 a2.7 2.7 0 0 1 -5.4 0 H1.8 A1.4 1.4 0 0 1 0.4 8 V6.4 c0 -0.9 0.6 -1.7 1.5 -1.9 L4 4.1 L5.6 2.1 C6.3 1.3 7.2 0.8 8.2 0.8 Z M8.4 2.2 c-0.6 0 -1.1 0.3 -1.5 0.7 L5.8 4.2 H10.4 V2.2 Z M11.8 2.2 V4.2 H18.4 L17.5 3.2 C16.9 2.6 16 2.2 15.1 2.2 Z M6.1 7.8 a1.5 1.5 0 1 0 0 3 a1.5 1.5 0 0 0 0 -3Z M20.9 7.8 a1.5 1.5 0 1 0 0 3 a1.5 1.5 0 0 0 0 -3Z" fill-rule="evenodd"/></svg>
<div class="cb" style="left:222.61px;top:240.61px;width:15.31px;height:15.5px"></div>
<svg class="a" style="left:226.3px;top:246.38px" width="7.75" height="4.72" viewBox="0 0 10 6" fill="none" stroke="#1e9bec" stroke-width="2.6" stroke-linecap="round" stroke-linejoin="round"><path d="M1 1 L5 5 L9 1"/></svg>
<div class="t c x" style="left:279.87px;top:249.59px;transform:translateY(-50%) scaleX(0.912);transform-origin:0 50%;">BMW X3</div>
<div class="t c n" style="left:472.06px;top:249.59px;transform:translateY(-50%);transform-origin:0 50%;letter-spacing:0.15px;">0</div>
<div class="t c" style="left:651.02px;top:249.59px;transform:translateY(-50%) scaleX(0.91);transform-origin:0 50%;">No</div>
<div class="t c n" style="left:859.46px;top:249.59px;transform:translateY(-50%);transform-origin:0 50%;letter-spacing:0.15px;">0/0</div>
<div class="row" style="left:183.5px;top:295.64px;width:862.68px"></div>
<svg class="a" style="left:246.99px;top:273.95px" width="24.76" height="12.09" viewBox="0 0 26 12" fill="#21b597" color="#21b597" preserveAspectRatio="none"><path d="M8.2 0.8 H15 c1.4 0 2.6 0.5 3.6 1.5 L20.6 4.2 L23.4 4.7 c1.3 0.3 2.2 1.3 2.2 2.6 V8.6 a0.8 0.8 0 0 1 -0.8 0.8 H23.6 a2.7 2.7 0 0 1 -5.4 0 H8.8 a2.7 2.7 0 0 1 -5.4 0 H1.8 A1.4 1.4 0 0 1 0.4 8 V6.4 c0 -0.9 0.6 -1.7 1.5 -1.9 L4 4.1 L5.6 2.1 C6.3 1.3 7.2 0.8 8.2 0.8 Z M8.4 2.2 c-0.6 0 -1.1 0.3 -1.5 0.7 L5.8 4.2 H10.4 V2.2 Z M11.8 2.2 V4.2 H18.4 L17.5 3.2 C16.9 2.6 16 2.2 15.1 2.2 Z M6.1 7.8 a1.5 1.5 0 1 0 0 3 a1.5 1.5 0 0 0 0 -3Z M20.9 7.8 a1.5 1.5 0 1 0 0 3 a1.5 1.5 0 0 0 0 -3Z" fill-rule="evenodd"/></svg>
<div class="cb" style="left:222.61px;top:272.53px;width:15.31px;height:15.5px"></div>
<svg class="a" style="left:226.3px;top:278.3px" width="7.75" height="4.72" viewBox="0 0 10 6" fill="none" stroke="#1e9bec" stroke-width="2.6" stroke-linecap="round" stroke-linejoin="round"><path d="M1 1 L5 5 L9 1"/></svg>
<div class="t c x" style="left:279.87px;top:281.51px;transform:translateY(-50%) scaleX(0.909);transform-origin:0 50%;">lada vesta</div>
<div class="t c n" style="left:472.06px;top:281.51px;transform:translateY(-50%);transform-origin:0 50%;letter-spacing:0.15px;">0</div>
<div class="t c" style="left:651.02px;top:281.51px;transform:translateY(-50%) scaleX(0.91);transform-origin:0 50%;">No</div>
<div class="t c n" style="left:859.46px;top:281.51px;transform:translateY(-50%);transform-origin:0 50%;letter-spacing:0.15px;">0/0</div>
<div class="row" style="left:183.5px;top:327.56px;width:862.68px"></div>
<svg class="a" style="left:253.98px;top:305.11px" width="11.91" height="14.55" viewBox="0 0 12 16" fill="#62656d" color="#62656d" preserveAspectRatio="none"><path d="M6 0.3 a5.7 5.7 0 0 1 5.7 5.7 c0 2.3 -0.8 3 -5.1 9.3 a0.7 0.7 0 0 1 -1.2 0 C1.1 9 0.3 8.3 0.3 6 A5.7 5.7 0 0 1 6 0.3 Z M6 3.6 a2.4 2.4 0 1 0 0 4.8 a2.4 2.4 0 0 0 0 -4.8Z" fill-rule="evenodd"/></svg>
<div class="cb" style="left:222.61px;top:304.45px;width:15.31px;height:15.5px"></div>
<svg class="a" style="left:226.3px;top:310.21px" width="7.75" height="4.72" viewBox="0 0 10 6" fill="none" stroke="#1e9bec" stroke-width="2.6" stroke-linecap="round" stroke-linejoin="round"><path d="M1 1 L5 5 L9 1"/></svg>
<div class="t c x" style="left:279.87px;top:313.43px;transform:translateY(-50%) scaleX(0.901);transform-origin:0 50%;">Lada Vesta</div>
<div class="t c n" style="left:472.06px;top:313.43px;transform:translateY(-50%);transform-origin:0 50%;letter-spacing:0.15px;">0</div>
<div class="t c" style="left:651.02px;top:313.43px;transform:translateY(-50%) scaleX(0.91);transform-origin:0 50%;">No</div>
<div class="t c n" style="left:859.46px;top:313.43px;transform:translateY(-50%);transform-origin:0 50%;letter-spacing:0.15px;">0/0</div>
<div class="row" style="left:183.5px;top:359.48px;width:862.68px"></div>
<svg class="a" style="left:251.15px;top:337.22px" width="17.57" height="13.98" viewBox="0 0 18 15" fill="#555" color="#555" preserveAspectRatio="none"><path d="M1.6 0.6 H4 V4.6 H1 Z M5 0.6 H7.4 V4.6 H5 Z M8.4 0.6 H10.8 V4.6 H8.4 Z M11.8 0.6 H14.2 V4.6 H11.8 Z M15.2 0.6 H16.6 L17.4 4.6 H15.2 Z M0.4 5.4 H17.6 V7.6 H16.8 L16 14.4 H2 L1.2 7.6 H0.4 Z"/></svg>
<div class="cb" style="left:222.61px;top:336.37px;width:15.31px;height:15.5px"></div>
<svg class="a" style="left:226.3px;top:342.13px" width="7.75" height="4.72" viewBox="0 0 10 6" fill="none" stroke="#1e9bec" stroke-width="2.6" stroke-linecap="round" stroke-linejoin="round"><path d="M1 1 L5 5 L9 1"/></svg>
<div class="t c x" style="left:279.87px;top:345.34px;transform:translateY(-50%) scaleX(0.935);transform-origin:0 50%;">Testt dumpster</div>
<div class="t c n" style="left:472.06px;top:345.34px;transform:translateY(-50%);transform-origin:0 50%;letter-spacing:0.15px;">0</div>
<div class="t c" style="left:651.02px;top:345.34px;transform:translateY(-50%) scaleX(0.91);transform-origin:0 50%;">No</div>
<div class="t c n" style="left:859.46px;top:345.34px;transform:translateY(-50%);transform-origin:0 50%;letter-spacing:0.15px;">0/0</div>
<div class="row" style="left:183.5px;top:391.4px;width:862.68px"></div>
<svg class="a" style="left:246.99px;top:369.7px" width="24.76" height="12.09" viewBox="0 0 26 12" fill="#ee4b3f" color="#ee4b3f" preserveAspectRatio="none"><path d="M8.2 0.8 H15 c1.4 0 2.6 0.5 3.6 1.5 L20.6 4.2 L23.4 4.7 c1.3 0.3 2.2 1.3 2.2 2.6 V8.6 a0.8 0.8 0 0 1 -0.8 0.8 H23.6 a2.7 2.7 0 0 1 -5.4 0 H8.8 a2.7 2.7 0 0 1 -5.4 0 H1.8 A1.4 1.4 0 0 1 0.4 8 V6.4 c0 -0.9 0.6 -1.7 1.5 -1.9 L4 4.1 L5.6 2.1 C6.3 1.3 7.2 0.8 8.2 0.8 Z M8.4 2.2 c-0.6 0 -1.1 0.3 -1.5 0.7 L5.8 4.2 H10.4 V2.2 Z M11.8 2.2 V4.2 H18.4 L17.5 3.2 C16.9 2.6 16 2.2 15.1 2.2 Z M6.1 7.8 a1.5 1.5 0 1 0 0 3 a1.5 1.5 0 0 0 0 -3Z M20.9 7.8 a1.5 1.5 0 1 0 0 3 a1.5 1.5 0 0 0 0 -3Z" fill-rule="evenodd"/></svg>
<div class="cb" style="left:222.61px;top:368.29px;width:15.31px;height:15.5px"></div>
<svg class="a" style="left:226.3px;top:374.05px" width="7.75" height="4.72" viewBox="0 0 10 6" fill="none" stroke="#1e9bec" stroke-width="2.6" stroke-linecap="round" stroke-linejoin="round"><path d="M1 1 L5 5 L9 1"/></svg>
<div class="t c x" style="left:279.87px;top:377.26px;transform:translateY(-50%) scaleX(0.876);transform-origin:0 50%;">TEST VEHICLE1</div>
<div class="t c n" style="left:472.06px;top:377.26px;transform:translateY(-50%);transform-origin:0 50%;letter-spacing:0.15px;">0</div>
<div class="t c" style="left:651.02px;top:377.26px;transform:translateY(-50%) scaleX(0.91);transform-origin:0 50%;">No</div>
<div class="t c n" style="left:859.46px;top:377.26px;transform:translateY(-50%);transform-origin:0 50%;letter-spacing:0.15px;">0/0</div>
<div class="row" style="left:183.5px;top:423.32px;width:862.68px"></div>
<svg class="a" style="left:255.12px;top:398.6px" width="9.83" height="17.39" viewBox="0 0 10 18" fill="#555"  preserveAspectRatio="none"><path d="M3.6 0.4 h1.4 v3.4 h-1.4z"/><path d="M5 6 a4.6 4.6 0 1 1 -0.1 0Z M5 8.8 a1.9 1.9 0 1 0 0.1 0Z" fill-rule="evenodd"/><path d="M3.2 3.6 h3.4 v2.6 h-3.4z"/></svg>
<div class="cb" style="left:222.61px;top:400.2px;width:15.31px;height:15.5px"></div>
<svg class="a" style="left:226.3px;top:405.97px" width="7.75" height="4.72" viewBox="0 0 10 6" fill="none" stroke="#1e9bec" stroke-width="2.6" stroke-linecap="round" stroke-linejoin="round"><path d="M1 1 L5 5 L9 1"/></svg>
<div class="t c x" style="left:279.87px;top:409.18px;transform:translateY(-50%) scaleX(0.949);transform-origin:0 50%;">P758CB178</div>
<div class="t c n" style="left:472.06px;top:409.18px;transform:translateY(-50%);transform-origin:0 50%;letter-spacing:0.15px;">1</div>
<div class="t c n" style="left:574.87px;top:409.18px;transform:translateY(-50%);transform-origin:0 50%;letter-spacing:-0.12px;">05.04.2023</div>
<div class="t c" style="left:651.02px;top:409.18px;transform:translateY(-50%) scaleX(0.91);transform-origin:0 50%;">Yes</div>
<div class="t c n" style="left:859.46px;top:409.18px;transform:translateY(-50%);transform-origin:0 50%;letter-spacing:0.15px;">14132/0</div>
<div class="row" style="left:183.5px;top:455.24px;width:862.68px"></div>
<svg class="a" style="left:204.28px;top:437.13px" width="10.39" height="6.61" viewBox="0 0 12 7" fill="none" stroke="#2e2e2e" stroke-width="2.4"><path d="M1 1 L6 6 L11 1"/></svg>
<svg class="a" style="left:244.16px;top:432.6px" width="19.46" height="13.42" viewBox="0 1.3 20 13.4" fill="#4a4d55" color="#4a4d55" preserveAspectRatio="none"><path d="M1.6 1.5 H6.5 L8.3 3.3 H15 a1.3 1.3 0 0 1 1.3 1.3 V6 H5.4 a1.8 1.8 0 0 0 -1.6 1 L0.3 13.6 V2.8 A1.3 1.3 0 0 1 1.6 1.5 Z"/><path d="M5.4 7.2 H19 a0.7 0.7 0 0 1 0.6 1 L16.6 13.9 a1.2 1.2 0 0 1 -1 0.6 H0.9 L4.4 7.8 a1.1 1.1 0 0 1 1 -0.6Z"/></svg>
<div class="cb" style="left:222.61px;top:432.12px;width:15.31px;height:15.5px"></div>
<svg class="a" style="left:226.3px;top:437.89px" width="7.75" height="4.72" viewBox="0 0 10 6" fill="none" stroke="#1e9bec" stroke-width="2.6" stroke-linecap="round" stroke-linejoin="round"><path d="M1 1 L5 5 L9 1"/></svg>
<div class="t c x" style="left:268.54px;top:440.72px;transform:translateY(-50%) scaleX(1.0);transform-origin:0 50%;font-size:11.5px;-webkit-text-stroke:0.4px #2e2e2e;">building</div>
<div class="t c" style="left:651.02px;top:440.72px;transform:translateY(-50%) scaleX(1.0);transform-origin:0 50%;font-size:11.5px;-webkit-text-stroke:0.4px #2e2e2e;">No</div>
<div class="row" style="left:183.5px;top:487.15px;width:862.68px"></div>
<svg class="a" style="left:269.1px;top:464.7px" width="11.91" height="14.55" viewBox="0 0 12 16" fill="#62656d" color="#62656d" preserveAspectRatio="none"><path d="M6 0.3 a5.7 5.7 0 0 1 5.7 5.7 c0 2.3 -0.8 3 -5.1 9.3 a0.7 0.7 0 0 1 -1.2 0 C1.1 9 0.3 8.3 0.3 6 A5.7 5.7 0 0 1 6 0.3 Z M6 3.6 a2.4 2.4 0 1 0 0 4.8 a2.4 2.4 0 0 0 0 -4.8Z" fill-rule="evenodd"/></svg>
<div class="cb" style="left:237.73px;top:464.04px;width:15.31px;height:15.5px"></div>
<svg class="a" style="left:241.42px;top:469.8px" width="7.75" height="4.72" viewBox="0 0 10 6" fill="none" stroke="#1e9bec" stroke-width="2.6" stroke-linecap="round" stroke-linejoin="round"><path d="M1 1 L5 5 L9 1"/></svg>
<div class="t c x" style="left:294.99px;top:473.02px;transform:translateY(-50%) scaleX(0.921);transform-origin:0 50%;">BMW M5 ф90</div>
<div class="t c n" style="left:472.06px;top:473.02px;transform:translateY(-50%);transform-origin:0 50%;letter-spacing:0.15px;">1</div>
<div class="t c n" style="left:574.87px;top:473.02px;transform:translateY(-50%);transform-origin:0 50%;letter-spacing:-0.12px;">16.02.2024</div>
<div class="t c" style="left:651.02px;top:473.02px;transform:translateY(-50%) scaleX(0.91);transform-origin:0 50%;">Yes</div>
<div class="t c n" style="left:859.46px;top:473.02px;transform:translateY(-50%);transform-origin:0 50%;letter-spacing:0.15px;">0/0</div>
<div class="row" style="left:183.5px;top:519.07px;width:862.68px"></div>
<svg class="a" style="left:269.1px;top:496.62px" width="11.91" height="14.55" viewBox="0 0 12 16" fill="#62656d" color="#62656d" preserveAspectRatio="none"><path d="M6 0.3 a5.7 5.7 0 0 1 5.7 5.7 c0 2.3 -0.8 3 -5.1 9.3 a0.7 0.7 0 0 1 -1.2 0 C1.1 9 0.3 8.3 0.3 6 A5.7 5.7 0 0 1 6 0.3 Z M6 3.6 a2.4 2.4 0 1 0 0 4.8 a2.4 2.4 0 0 0 0 -4.8Z" fill-rule="evenodd"/></svg>
<div class="cb" style="left:237.73px;top:495.96px;width:15.31px;height:15.5px"></div>
<svg class="a" style="left:241.42px;top:501.72px" width="7.75" height="4.72" viewBox="0 0 10 6" fill="none" stroke="#1e9bec" stroke-width="2.6" stroke-linecap="round" stroke-linejoin="round"><path d="M1 1 L5 5 L9 1"/></svg>
<div class="t c x" style="left:294.99px;top:504.94px;transform:translateY(-50%) scaleX(0.933);transform-origin:0 50%;">camión de combustible</div>
<div class="t c n" style="left:472.06px;top:504.94px;transform:translateY(-50%);transform-origin:0 50%;letter-spacing:0.15px;">1</div>
<div class="t c n" style="left:574.87px;top:504.94px;transform:translateY(-50%);transform-origin:0 50%;letter-spacing:-0.12px;">07.07.2022</div>
<div class="t c" style="left:651.02px;top:504.94px;transform:translateY(-50%) scaleX(0.91);transform-origin:0 50%;">Yes</div>
<div class="t c n" style="left:859.46px;top:504.94px;transform:translateY(-50%);transform-origin:0 50%;letter-spacing:0.15px;">0/0</div>
<div class="row" style="left:183.5px;top:550.99px;width:862.68px"></div>
<div class="cb" style="left:237.73px;top:527.88px;width:15.31px;height:15.5px"></div>
<svg class="a" style="left:241.42px;top:533.64px" width="7.75" height="4.72" viewBox="0 0 10 6" fill="none" stroke="#1e9bec" stroke-width="2.6" stroke-linecap="round" stroke-linejoin="round"><path d="M1 1 L5 5 L9 1"/></svg>
<div class="t c x" style="left:294.99px;top:536.85px;transform:translateY(-50%) scaleX(0.86);transform-origin:0 50%;">Kia Rio</div>
<div class="t c n" style="left:472.06px;top:536.85px;transform:translateY(-50%);transform-origin:0 50%;letter-spacing:0.15px;">5</div>
<div class="t c n" style="left:574.87px;top:536.85px;transform:translateY(-50%);transform-origin:0 50%;letter-spacing:-0.12px;">29.09.2025</div>
<div class="t c" style="left:651.02px;top:536.85px;transform:translateY(-50%) scaleX(0.91);transform-origin:0 50%;">Yes</div>
<div class="t c n" style="left:783.87px;top:536.85px;transform:translateY(-50%);transform-origin:0 50%;letter-spacing:-0.12px;">15.02.2026</div>
<div class="t c n" style="left:859.46px;top:536.85px;transform:translateY(-50%);transform-origin:0 50%;letter-spacing:0.15px;">902/0</div>
<div class="t c n" style="left:1010.65px;top:536.85px;transform:translateY(-50%);transform-origin:0 50%;letter-spacing:0.15px;">0/0</div>
<div class="row" style="left:183.5px;top:582.91px;width:862.68px"></div>
<svg class="a" style="left:262.11px;top:561.21px" width="24.76" height="12.09" viewBox="0 0 26 12" fill="#72757d" color="#72757d" preserveAspectRatio="none"><path d="M8.2 0.8 H15 c1.4 0 2.6 0.5 3.6 1.5 L20.6 4.2 L23.4 4.7 c1.3 0.3 2.2 1.3 2.2 2.6 V8.6 a0.8 0.8 0 0 1 -0.8 0.8 H23.6 a2.7 2.7 0 0 1 -5.4 0 H8.8 a2.7 2.7 0 0 1 -5.4 0 H1.8 A1.4 1.4 0 0 1 0.4 8 V6.4 c0 -0.9 0.6 -1.7 1.5 -1.9 L4 4.1 L5.6 2.1 C6.3 1.3 7.2 0.8 8.2 0.8 Z M8.4 2.2 c-0.6 0 -1.1 0.3 -1.5 0.7 L5.8 4.2 H10.4 V2.2 Z M11.8 2.2 V4.2 H18.4 L17.5 3.2 C16.9 2.6 16 2.2 15.1 2.2 Z M6.1 7.8 a1.5 1.5 0 1 0 0 3 a1.5 1.5 0 0 0 0 -3Z M20.9 7.8 a1.5 1.5 0 1 0 0 3 a1.5 1.5 0 0 0 0 -3Z" fill-rule="evenodd"/></svg>
<div class="cb" style="left:237.73px;top:559.8px;width:15.31px;height:15.5px"></div>
<svg class="a" style="left:241.42px;top:565.56px" width="7.75" height="4.72" viewBox="0 0 10 6" fill="none" stroke="#1e9bec" stroke-width="2.6" stroke-linecap="round" stroke-linejoin="round"><path d="M1 1 L5 5 L9 1"/></svg>
<div class="t c x" style="left:294.99px;top:568.77px;transform:translateY(-50%) scaleX(0.919);transform-origin:0 50%;">Tracker test</div>
<div class="t c n" style="left:472.06px;top:568.77px;transform:translateY(-50%);transform-origin:0 50%;letter-spacing:0.15px;">0</div>
<div class="t c" style="left:651.02px;top:568.77px;transform:translateY(-50%) scaleX(0.91);transform-origin:0 50%;">No</div>
<div class="t c n" style="left:859.46px;top:568.77px;transform:translateY(-50%);transform-origin:0 50%;letter-spacing:0.15px;">0/0</div>
<div class="row" style="left:183.5px;top:614.83px;width:862.68px"></div>
<svg class="a" style="left:263.06px;top:592.0px" width="23.81" height="15.12" viewBox="0 0 28 17" fill="#3b3be0"  preserveAspectRatio="none"><path d="M1 1 H10 V11 H13 V6 H16 V12 H1 Z M3 3 V7 H8 V3 Z" fill-rule="evenodd"/><path d="M1 13.2 H15 a1.7 1.7 0 0 1 0 3.4 H1 a1.7 1.7 0 0 1 0 -3.4Z"/><path d="M15.5 9 L20 2.4 L25.5 6.6 L27.5 10 L26.4 10.6 L24.4 7.8 L20.4 4.8 L17 10Z"/></svg>
<div class="cb" style="left:237.73px;top:591.71px;width:15.31px;height:15.5px"></div>
<svg class="a" style="left:241.42px;top:597.48px" width="7.75" height="4.72" viewBox="0 0 10 6" fill="none" stroke="#1e9bec" stroke-width="2.6" stroke-linecap="round" stroke-linejoin="round"><path d="M1 1 L5 5 L9 1"/></svg>
<div class="t c x" style="left:294.99px;top:600.69px;transform:translateY(-50%) scaleX(0.964);transform-origin:0 50%;">VAZ 2110</div>
<div class="t c n" style="left:472.06px;top:600.69px;transform:translateY(-50%);transform-origin:0 50%;letter-spacing:0.15px;">4</div>
<div class="t c n" style="left:574.87px;top:600.69px;transform:translateY(-50%);transform-origin:0 50%;letter-spacing:-0.12px;">23.04.2024</div>
<div class="t c" style="left:651.02px;top:600.69px;transform:translateY(-50%) scaleX(0.91);transform-origin:0 50%;">Yes</div>
<div class="t c n" style="left:859.46px;top:600.69px;transform:translateY(-50%);transform-origin:0 50%;letter-spacing:0.15px;">296768/0</div>
<div class="row" style="left:183.5px;top:646.74px;width:862.68px"></div>
<svg class="a" style="left:262.11px;top:625.05px" width="24.76" height="12.09" viewBox="0 0 26 12" fill="#72757d" color="#72757d" preserveAspectRatio="none"><path d="M8.2 0.8 H15 c1.4 0 2.6 0.5 3.6 1.5 L20.6 4.2 L23.4 4.7 c1.3 0.3 2.2 1.3 2.2 2.6 V8.6 a0.8 0.8 0 0 1 -0.8 0.8 H23.6 a2.7 2.7 0 0 1 -5.4 0 H8.8 a2.7 2.7 0 0 1 -5.4 0 H1.8 A1.4 1.4 0 0 1 0.4 8 V6.4 c0 -0.9 0.6 -1.7 1.5 -1.9 L4 4.1 L5.6 2.1 C6.3 1.3 7.2 0.8 8.2 0.8 Z M8.4 2.2 c-0.6 0 -1.1 0.3 -1.5 0.7 L5.8 4.2 H10.4 V2.2 Z M11.8 2.2 V4.2 H18.4 L17.5 3.2 C16.9 2.6 16 2.2 15.1 2.2 Z M6.1 7.8 a1.5 1.5 0 1 0 0 3 a1.5 1.5 0 0 0 0 -3Z M20.9 7.8 a1.5 1.5 0 1 0 0 3 a1.5 1.5 0 0 0 0 -3Z" fill-rule="evenodd"/></svg>
<div class="cb" style="left:237.73px;top:623.63px;width:15.31px;height:15.5px"></div>
<svg class="a" style="left:241.42px;top:629.4px" width="7.75" height="4.72" viewBox="0 0 10 6" fill="none" stroke="#1e9bec" stroke-width="2.6" stroke-linecap="round" stroke-linejoin="round"><path d="M1 1 L5 5 L9 1"/></svg>
<div class="t c x" style="left:294.99px;top:632.61px;transform:translateY(-50%) scaleX(0.924);transform-origin:0 50%;">veh1 test</div>
<div class="t c n" style="left:472.06px;top:632.61px;transform:translateY(-50%);transform-origin:0 50%;letter-spacing:0.15px;">0</div>
<div class="t c" style="left:651.02px;top:632.61px;transform:translateY(-50%) scaleX(0.91);transform-origin:0 50%;">No</div>
<div class="t c n" style="left:859.46px;top:632.61px;transform:translateY(-50%);transform-origin:0 50%;letter-spacing:0.15px;">111316/1673</div>
<div class="row" style="left:183.5px;top:678.66px;width:862.68px"></div>
<svg class="a" style="left:262.11px;top:656.97px" width="24.76" height="12.09" viewBox="0 0 26 12" fill="#72757d" color="#72757d" preserveAspectRatio="none"><path d="M8.2 0.8 H15 c1.4 0 2.6 0.5 3.6 1.5 L20.6 4.2 L23.4 4.7 c1.3 0.3 2.2 1.3 2.2 2.6 V8.6 a0.8 0.8 0 0 1 -0.8 0.8 H23.6 a2.7 2.7 0 0 1 -5.4 0 H8.8 a2.7 2.7 0 0 1 -5.4 0 H1.8 A1.4 1.4 0 0 1 0.4 8 V6.4 c0 -0.9 0.6 -1.7 1.5 -1.9 L4 4.1 L5.6 2.1 C6.3 1.3 7.2 0.8 8.2 0.8 Z M8.4 2.2 c-0.6 0 -1.1 0.3 -1.5 0.7 L5.8 4.2 H10.4 V2.2 Z M11.8 2.2 V4.2 H18.4 L17.5 3.2 C16.9 2.6 16 2.2 15.1 2.2 Z M6.1 7.8 a1.5 1.5 0 1 0 0 3 a1.5 1.5 0 0 0 0 -3Z M20.9 7.8 a1.5 1.5 0 1 0 0 3 a1.5 1.5 0 0 0 0 -3Z" fill-rule="evenodd"/></svg>
<div class="cb" style="left:237.73px;top:655.55px;width:15.31px;height:15.5px"></div>
<svg class="a" style="left:241.42px;top:661.31px" width="7.75" height="4.72" viewBox="0 0 10 6" fill="none" stroke="#1e9bec" stroke-width="2.6" stroke-linecap="round" stroke-linejoin="round"><path d="M1 1 L5 5 L9 1"/></svg>
<div class="t c x" style="left:294.99px;top:664.53px;transform:translateY(-50%) scaleX(0.935);transform-origin:0 50%;">Ваз 2107</div>
<div class="t c n" style="left:472.06px;top:664.53px;transform:translateY(-50%);transform-origin:0 50%;letter-spacing:0.15px;">0</div>
<div class="t c" style="left:651.02px;top:664.53px;transform:translateY(-50%) scaleX(0.91);transform-origin:0 50%;">No</div>
<div class="t c n" style="left:859.46px;top:664.53px;transform:translateY(-50%);transform-origin:0 50%;letter-spacing:0.15px;">411732/0</div>
<div class="row" style="left:183.5px;top:710.58px;width:862.68px"></div>
<svg class="a" style="left:268.72px;top:687.75px" width="12.85" height="15.12" viewBox="0 0 14 16" fill="#555"  preserveAspectRatio="none"><ellipse cx="3.4" cy="4.6" rx="2.6" ry="4.2"/><rect x="1.2" y="10" width="4.4" height="4.6" rx="1.6"/><ellipse cx="10.6" cy="4.6" rx="2.6" ry="4.2"/><rect x="8.4" y="10" width="4.4" height="4.6" rx="1.6"/></svg>
<div class="cb" style="left:237.73px;top:687.47px;width:15.31px;height:15.5px"></div>
<svg class="a" style="left:241.42px;top:693.23px" width="7.75" height="4.72" viewBox="0 0 10 6" fill="none" stroke="#1e9bec" stroke-width="2.6" stroke-linecap="round" stroke-linejoin="round"><path d="M1 1 L5 5 L9 1"/></svg>
<div class="t c x" style="left:294.99px;top:696.44px;transform:translateY(-50%) scaleX(0.952);transform-origin:0 50%;">Ваз 2115</div>
<div class="t c n" style="left:472.06px;top:696.44px;transform:translateY(-50%);transform-origin:0 50%;letter-spacing:0.15px;">0</div>
<div class="t c" style="left:651.02px;top:696.44px;transform:translateY(-50%) scaleX(0.91);transform-origin:0 50%;">No</div>
<div class="t c n" style="left:859.46px;top:696.44px;transform:translateY(-50%);transform-origin:0 50%;letter-spacing:0.15px;">313599/0</div>
<div class="row" style="left:183.5px;top:742.5px;width:862.68px"></div>
<svg class="a" style="left:269.1px;top:720.05px" width="11.91" height="14.55" viewBox="0 0 12 16" fill="#62656d" color="#62656d" preserveAspectRatio="none"><path d="M6 0.3 a5.7 5.7 0 0 1 5.7 5.7 c0 2.3 -0.8 3 -5.1 9.3 a0.7 0.7 0 0 1 -1.2 0 C1.1 9 0.3 8.3 0.3 6 A5.7 5.7 0 0 1 6 0.3 Z M6 3.6 a2.4 2.4 0 1 0 0 4.8 a2.4 2.4 0 0 0 0 -4.8Z" fill-rule="evenodd"/></svg>
<div class="cb" style="left:237.73px;top:719.39px;width:15.31px;height:15.5px"></div>
<svg class="a" style="left:241.42px;top:725.15px" width="7.75" height="4.72" viewBox="0 0 10 6" fill="none" stroke="#1e9bec" stroke-width="2.6" stroke-linecap="round" stroke-linejoin="round"><path d="M1 1 L5 5 L9 1"/></svg>
<div class="t c x" style="left:294.99px;top:728.36px;transform:translateY(-50%) scaleX(0.952);transform-origin:0 50%;">Ваз 2115</div>
<div class="t c n" style="left:472.06px;top:728.36px;transform:translateY(-50%);transform-origin:0 50%;letter-spacing:0.15px;">0</div>
<div class="t c" style="left:651.02px;top:728.36px;transform:translateY(-50%) scaleX(0.91);transform-origin:0 50%;">No</div>
<div class="t c n" style="left:859.46px;top:728.36px;transform:translateY(-50%);transform-origin:0 50%;letter-spacing:0.15px;">0/0</div>
<div class="row" style="left:183.5px;top:774.42px;width:862.68px"></div>
<svg class="a" style="left:258.9px;top:751.21px" width="32.13" height="15.87" viewBox="0 0 34 17" fill="#5d5a58"  preserveAspectRatio="none"><path d="M9 1.2 C14 0.2 26 0.2 31 1 C32.6 1.3 33.4 2.4 33.4 4 V12.4 c0 0.9 -0.6 1.5 -1.4 1.5 H30.5 a3.4 3.4 0 0 1 -6.6 0 H11.2 a3.4 3.4 0 0 1 -6.6 0 H2.2 C1.2 13.9 0.5 13.2 0.5 12.2 V9.4 c0 -1.3 0.8 -2.2 2 -2.6 L5.4 6 L7 2.8 C7.4 2 8.1 1.4 9 1.2Z"/><circle cx="7.9" cy="13.4" r="2.7" fill="#3a3a3e"/><circle cx="27.2" cy="13.4" r="2.7" fill="#3a3a3e"/><path d="M9.4 2.6 L7.6 6.2 H15 V2.4 C13 2.4 11 2.4 9.4 2.6Z M16.4 2.4 V6.2 H24 V2.2 C21.6 2.2 18.8 2.2 16.4 2.4Z M25.4 2.2 V6.2 H31.6 V3.4 C31.6 2.8 31.2 2.4 30.6 2.3 C29 2.2 27 2.2 25.4 2.2Z" fill="#3f4046"/></svg>
<div class="cb" style="left:237.73px;top:751.3px;width:15.31px;height:15.5px"></div>
<svg class="a" style="left:241.42px;top:757.07px" width="7.75" height="4.72" viewBox="0 0 10 6" fill="none" stroke="#1e9bec" stroke-width="2.6" stroke-linecap="round" stroke-linejoin="round"><path d="M1 1 L5 5 L9 1"/></svg>
<div class="t c x" style="left:294.99px;top:760.28px;transform:translateY(-50%) scaleX(0.943);transform-origin:0 50%;">Лада Ларгус</div>
<div class="t c n" style="left:472.06px;top:760.28px;transform:translateY(-50%);transform-origin:0 50%;letter-spacing:0.15px;">0</div>
<div class="t c" style="left:651.02px;top:760.28px;transform:translateY(-50%) scaleX(0.91);transform-origin:0 50%;">No</div>
<div class="t c n" style="left:859.46px;top:760.28px;transform:translateY(-50%);transform-origin:0 50%;letter-spacing:0.15px;">120139/2258</div>
<div class="row" style="left:183.5px;top:806.33px;width:862.68px"></div>
<svg class="a" style="left:262.11px;top:784.64px" width="24.76" height="12.09" viewBox="0 0 26 12" fill="#72757d" color="#72757d" preserveAspectRatio="none"><path d="M8.2 0.8 H15 c1.4 0 2.6 0.5 3.6 1.5 L20.6 4.2 L23.4 4.7 c1.3 0.3 2.2 1.3 2.2 2.6 V8.6 a0.8 0.8 0 0 1 -0.8 0.8 H23.6 a2.7 2.7 0 0 1 -5.4 0 H8.8 a2.7 2.7 0 0 1 -5.4 0 H1.8 A1.4 1.4 0 0 1 0.4 8 V6.4 c0 -0.9 0.6 -1.7 1.5 -1.9 L4 4.1 L5.6 2.1 C6.3 1.3 7.2 0.8 8.2 0.8 Z M8.4 2.2 c-0.6 0 -1.1 0.3 -1.5 0.7 L5.8 4.2 H10.4 V2.2 Z M11.8 2.2 V4.2 H18.4 L17.5 3.2 C16.9 2.6 16 2.2 15.1 2.2 Z M6.1 7.8 a1.5 1.5 0 1 0 0 3 a1.5 1.5 0 0 0 0 -3Z M20.9 7.8 a1.5 1.5 0 1 0 0 3 a1.5 1.5 0 0 0 0 -3Z" fill-rule="evenodd"/></svg>
<div class="cb" style="left:237.73px;top:783.22px;width:15.31px;height:15.5px"></div>
<svg class="a" style="left:241.42px;top:788.99px" width="7.75" height="4.72" viewBox="0 0 10 6" fill="none" stroke="#1e9bec" stroke-width="2.6" stroke-linecap="round" stroke-linejoin="round"><path d="M1 1 L5 5 L9 1"/></svg>
<div class="t c x" style="left:294.99px;top:792.2px;transform:translateY(-50%) scaleX(1.0);transform-origin:0 50%;">М358ку797</div>
<div class="t c n" style="left:472.06px;top:792.2px;transform:translateY(-50%);transform-origin:0 50%;letter-spacing:0.15px;">0</div>
<div class="t c" style="left:651.02px;top:792.2px;transform:translateY(-50%) scaleX(0.91);transform-origin:0 50%;">No</div>
<div class="t c n" style="left:859.46px;top:792.2px;transform:translateY(-50%);transform-origin:0 50%;letter-spacing:0.15px;">1577906/0</div>
<div class="row" style="left:183.5px;top:838.25px;width:862.68px"></div>
<svg class="a" style="left:264.57px;top:815.61px" width="20.98" height="14.36" viewBox="0 0 22 15" fill="#7c33e8"  preserveAspectRatio="none"><path d="M0.3 2 H11.6 L10.4 9.4 H7.6 a3 3 0 0 0 -5.6 0 H1.6 Z"/><path d="M12.4 0.3 H19 V4.4 L21.6 5.2 V11.6 H19.6 a3 3 0 0 0 -5.8 0 H11 L12.4 3 Z M14.6 2 V5.6 H17.6 V2 Z" fill-rule="evenodd"/><circle cx="4.8" cy="12.2" r="2.5"/><circle cx="16.6" cy="12.2" r="2.5"/></svg>
<div class="cb" style="left:237.73px;top:815.14px;width:15.31px;height:15.5px"></div>
<svg class="a" style="left:241.42px;top:820.9px" width="7.75" height="4.72" viewBox="0 0 10 6" fill="none" stroke="#1e9bec" stroke-width="2.6" stroke-linecap="round" stroke-linejoin="round"><path d="M1 1 L5 5 L9 1"/></svg>
<div class="t c x" style="left:294.99px;top:824.12px;transform:translateY(-50%) scaleX(0.94);transform-origin:0 50%;">Мерседес спринтер</div>
<div class="t c n" style="left:472.06px;top:824.12px;transform:translateY(-50%);transform-origin:0 50%;letter-spacing:0.15px;">3</div>
<div class="t c n" style="left:574.87px;top:824.12px;transform:translateY(-50%);transform-origin:0 50%;letter-spacing:-0.12px;">13.03.2024</div>
<div class="t c" style="left:651.02px;top:824.12px;transform:translateY(-50%) scaleX(0.91);transform-origin:0 50%;">Yes</div>
<div class="t c n" style="left:859.46px;top:824.12px;transform:translateY(-50%);transform-origin:0 50%;letter-spacing:0.15px;">299467/19021</div>
<div class="row" style="left:183.5px;top:870.17px;width:862.68px"></div>
<svg class="a" style="left:262.11px;top:848.48px" width="24.76" height="12.09" viewBox="0 0 26 12" fill="#ee4b3f" color="#ee4b3f" preserveAspectRatio="none"><path d="M8.2 0.8 H15 c1.4 0 2.6 0.5 3.6 1.5 L20.6 4.2 L23.4 4.7 c1.3 0.3 2.2 1.3 2.2 2.6 V8.6 a0.8 0.8 0 0 1 -0.8 0.8 H23.6 a2.7 2.7 0 0 1 -5.4 0 H8.8 a2.7 2.7 0 0 1 -5.4 0 H1.8 A1.4 1.4 0 0 1 0.4 8 V6.4 c0 -0.9 0.6 -1.7 1.5 -1.9 L4 4.1 L5.6 2.1 C6.3 1.3 7.2 0.8 8.2 0.8 Z M8.4 2.2 c-0.6 0 -1.1 0.3 -1.5 0.7 L5.8 4.2 H10.4 V2.2 Z M11.8 2.2 V4.2 H18.4 L17.5 3.2 C16.9 2.6 16 2.2 15.1 2.2 Z M6.1 7.8 a1.5 1.5 0 1 0 0 3 a1.5 1.5 0 0 0 0 -3Z M20.9 7.8 a1.5 1.5 0 1 0 0 3 a1.5 1.5 0 0 0 0 -3Z" fill-rule="evenodd"/></svg>
<div class="cb" style="left:237.73px;top:847.06px;width:15.31px;height:15.5px"></div>
<svg class="a" style="left:241.42px;top:852.82px" width="7.75" height="4.72" viewBox="0 0 10 6" fill="none" stroke="#1e9bec" stroke-width="2.6" stroke-linecap="round" stroke-linejoin="round"><path d="M1 1 L5 5 L9 1"/></svg>
<div class="t c x" style="left:294.99px;top:856.03px;transform:translateY(-50%) scaleX(0.924);transform-origin:0 50%;">Мой автомобиль</div>
<div class="t c n" style="left:472.06px;top:856.03px;transform:translateY(-50%);transform-origin:0 50%;letter-spacing:0.15px;">2</div>
<div class="t c n" style="left:574.87px;top:856.03px;transform:translateY(-50%);transform-origin:0 50%;letter-spacing:-0.12px;">20.10.2022</div>
<div class="t c" style="left:651.02px;top:856.03px;transform:translateY(-50%) scaleX(0.91);transform-origin:0 50%;">Yes</div>
<div class="t c n" style="left:859.46px;top:856.03px;transform:translateY(-50%);transform-origin:0 50%;letter-spacing:0.15px;">304534/0</div>
<div class="row" style="left:183.5px;top:902.09px;width:862.68px"></div>
<svg class="a" style="left:262.11px;top:880.39px" width="24.76" height="12.09" viewBox="0 0 26 12" fill="#72757d" color="#72757d" preserveAspectRatio="none"><path d="M8.2 0.8 H15 c1.4 0 2.6 0.5 3.6 1.5 L20.6 4.2 L23.4 4.7 c1.3 0.3 2.2 1.3 2.2 2.6 V8.6 a0.8 0.8 0 0 1 -0.8 0.8 H23.6 a2.7 2.7 0 0 1 -5.4 0 H8.8 a2.7 2.7 0 0 1 -5.4 0 H1.8 A1.4 1.4 0 0 1 0.4 8 V6.4 c0 -0.9 0.6 -1.7 1.5 -1.9 L4 4.1 L5.6 2.1 C6.3 1.3 7.2 0.8 8.2 0.8 Z M8.4 2.2 c-0.6 0 -1.1 0.3 -1.5 0.7 L5.8 4.2 H10.4 V2.2 Z M11.8 2.2 V4.2 H18.4 L17.5 3.2 C16.9 2.6 16 2.2 15.1 2.2 Z M6.1 7.8 a1.5 1.5 0 1 0 0 3 a1.5 1.5 0 0 0 0 -3Z M20.9 7.8 a1.5 1.5 0 1 0 0 3 a1.5 1.5 0 0 0 0 -3Z" fill-rule="evenodd"/></svg>
<div class="cb" style="left:237.73px;top:878.98px;width:15.31px;height:15.5px"></div>
<svg class="a" style="left:241.42px;top:884.74px" width="7.75" height="4.72" viewBox="0 0 10 6" fill="none" stroke="#1e9bec" stroke-width="2.6" stroke-linecap="round" stroke-linejoin="round"><path d="M1 1 L5 5 L9 1"/></svg>
<div class="t c x" style="left:294.99px;top:887.95px;transform:translateY(-50%) scaleX(0.934);transform-origin:0 50%;">Мой мотоцикл</div>
<div class="t c n" style="left:472.06px;top:887.95px;transform:translateY(-50%);transform-origin:0 50%;letter-spacing:0.15px;">1</div>
<div class="t c n" style="left:574.87px;top:887.95px;transform:translateY(-50%);transform-origin:0 50%;letter-spacing:-0.12px;">13.03.2024</div>
<div class="t c" style="left:651.02px;top:887.95px;transform:translateY(-50%) scaleX(0.91);transform-origin:0 50%;">Yes</div>
<div class="t c n" style="left:859.46px;top:887.95px;transform:translateY(-50%);transform-origin:0 50%;letter-spacing:0.15px;">1221935/0</div>
<div class="row" style="left:183.5px;top:934.01px;width:862.68px"></div>
<svg class="a" style="left:266.27px;top:910.61px" width="17.2" height="14.93" viewBox="0 0 22 18" fill="#5e6068"  preserveAspectRatio="none"><path d="M5 0.6 H13 V1.8 H12 V7 H18 V2.6 h1.4 V7 h1 c0.8 0 1.4 0.6 1.4 1.4 V12 H20.6 a3.4 3.4 0 0 0 -6.4 0.6 H13.6 a5.6 5.6 0 0 0 -9.8 -3 V1.8 H5Z M5.6 2 V6.6 H10.4 V2Z" fill-rule="evenodd"/><path d="M6.8 8.6 a4.6 4.6 0 1 1 -0.1 0Z M6.8 11.2 a2 2 0 1 0 0.1 0Z" fill-rule="evenodd"/><path d="M17.6 11.4 a3 3 0 1 1 -0.1 0Z M17.6 13.2 a1.2 1.2 0 1 0 0.1 0Z" fill-rule="evenodd"/></svg>
<div class="cb" style="left:237.73px;top:910.89px;width:15.31px;height:15.5px"></div>
<svg class="a" style="left:241.42px;top:916.66px" width="7.75" height="4.72" viewBox="0 0 10 6" fill="none" stroke="#1e9bec" stroke-width="2.6" stroke-linecap="round" stroke-linejoin="round"><path d="M1 1 L5 5 L9 1"/></svg>
<div class="t c x" style="left:294.99px;top:919.87px;transform:translateY(-50%) scaleX(1.019);transform-origin:0 50%;">o987tp790</div>
<div class="t c n" style="left:472.06px;top:919.87px;transform:translateY(-50%);transform-origin:0 50%;letter-spacing:0.15px;">0</div>
<div class="t c" style="left:651.02px;top:919.87px;transform:translateY(-50%) scaleX(0.91);transform-origin:0 50%;">No</div>
<div class="t c n" style="left:859.46px;top:919.87px;transform:translateY(-50%);transform-origin:0 50%;letter-spacing:0.15px;">295735/0</div>
<div class="a" style="left:1046.55px;top:168.94px;width:9.07px;height:776.31px;background:#f9f9f9"></div>
<div class="a" style="left:183.5px;top:939.97px;width:872.13px;height:5.29px;background:#fff"></div>
<div class="a" style="left:1048.63px;top:180.47px;width:4.72px;height:235.46px;background:#6a6a6a;border-radius:3px"></div>
<svg class="a" style="left:1047.87px;top:172.16px" width="6.43" height="3.59" viewBox="0 0 10 6" fill="#555"><path d="M5 0 L10 6 H0Z"/></svg>
<svg class="a" style="left:1047.87px;top:932.03px" width="6.43" height="3.59" viewBox="0 0 10 6" fill="#555"><path d="M5 6 L10 0 H0Z"/></svg>
<div class="a" style="left:194.65px;top:941.29px;width:642.52px;height:3.78px;background:#7d7d7d;border-radius:3px"></div>
<svg class="a" style="left:186.33px;top:940.35px" width="3.4" height="4.54" viewBox="0 0 6 10" fill="#444"><path d="M0 5 L6 0 V10Z"/></svg>
<svg class="a" style="left:1038.24px;top:940.35px" width="3.4" height="4.54" viewBox="0 0 6 10" fill="#444"><path d="M6 5 L0 0 V10Z"/></svg>
</section>
<section>
<div class="panel" style="left:1059.21px;top:50.83px;width:868.35px;height:894.43px;border-radius:10px 0 0 0"></div>
<div class="a" style="left:1059.21px;top:98.27px;width:868.35px;height:1px;background:#ececec"></div>
<div class="t ttl" style="left:1083.59px;top:74.83px;transform:translateY(-50%);transform-origin:0 50%;">Dashboard</div>
<svg class="a" style="left:1890.14px;top:67.84px" width="15.12" height="13.23" viewBox="0 0 16 16" fill="#4f535b" color="#4f535b" preserveAspectRatio="none"><g fill="none" stroke="currentColor" stroke-width="2.4"><path d="M1.8 7.2 A6.2 6.2 0 0 1 12.6 3.8"/><path d="M14.2 8.8 A6.2 6.2 0 0 1 3.4 12.2"/></g><path d="M15.4 0.4 V6.4 H9.4 Z"/><path d="M0.6 15.6 V9.6 H6.6 Z"/></svg>
<div class="card" style="left:1068.09px;top:108.47px;width:855.69px;height:404.41px"></div>
<div class="t ct" style="left:1495.94px;top:127.18px;width:400px;margin-left:-200px;transform:translateY(-50%);font-size:17.2px">Reminders</div>
<div class="t cs" style="left:1495.94px;top:153.64px;width:600px;margin-left:-300px;transform:translateY(-50%);font-size:12px">Number of vehicles per reminder status</div>
<svg class="a" style="left:0;top:0" width="1920" height="944" viewBox="0 0 1920 944"><path d="M1495.94 318.05 L1495.94 183.31 A134.74 134.74 0 1 1 1362.57 337.23 Z" fill="#2caffe" stroke="#fff" stroke-width="1" stroke-linejoin="round"/><path d="M1495.94 318.05 L1362.57 337.23 A134.74 134.74 0 0 1 1423.09 204.70 Z" fill="#544fc5" stroke="#fff" stroke-width="1" stroke-linejoin="round"/><path d="M1495.94 318.05 L1423.09 204.70 A134.74 134.74 0 0 1 1495.94 183.31 Z" fill="#00e272" stroke="#fff" stroke-width="1" stroke-linejoin="round"/></svg>
<div class="a" style="left:1387.65px;top:480.94px;width:10.96px;height:10.96px;border-radius:50%;background:#2caffe"></div>
<div class="t " style="left:1406.74px;top:486.61px;transform:translateY(-50%);transform-origin:0 50%;font-size:11.2px;font-weight:bold;color:#333">Overdue</div>
<div class="a" style="left:1474.2px;top:480.94px;width:10.96px;height:10.96px;border-radius:50%;background:#544fc5"></div>
<div class="t " style="left:1493.29px;top:486.61px;transform:translateY(-50%);transform-origin:0 50%;font-size:11.2px;font-weight:bold;color:#333">Closed</div>
<div class="a" style="left:1551.31px;top:480.94px;width:10.96px;height:10.96px;border-radius:50%;background:#00e272"></div>
<div class="t " style="left:1570.39px;top:486.61px;transform:translateY(-50%);transform-origin:0 50%;font-size:11.2px;font-weight:bold;color:#333">Active</div>
<div class="card" style="left:1068.09px;top:533.67px;width:855.69px;height:404.98px"></div>
<div class="t ct" style="left:1495.94px;top:552.19px;width:400px;margin-left:-200px;transform:translateY(-50%);font-size:17.2px">Service cost</div>
<div class="t cs" style="left:1495.94px;top:577.51px;width:600px;margin-left:-300px;transform:translateY(-50%);font-size:12px">Service cost by month</div>
<div class="t" style="left:1038.33px;top:901.61px;width:60px;text-align:right;transform:translateY(-50%);font-size:11.4px;color:#444">0</div>
<div class="a" style="left:1111.56px;top:857.51px;width:800.88px;height:1px;background:#e6e6e6"></div>
<div class="t" style="left:1038.33px;top:858.2px;width:60px;text-align:right;transform:translateY(-50%);font-size:11.4px;color:#444">10k</div>
<div class="a" style="left:1111.56px;top:814.1px;width:800.88px;height:1px;background:#e6e6e6"></div>
<div class="t" style="left:1038.33px;top:814.79px;width:60px;text-align:right;transform:translateY(-50%);font-size:11.4px;color:#444">20k</div>
<div class="a" style="left:1111.56px;top:770.69px;width:800.88px;height:1px;background:#e6e6e6"></div>
<div class="t" style="left:1038.33px;top:771.38px;width:60px;text-align:right;transform:translateY(-50%);font-size:11.4px;color:#444">30k</div>
<div class="a" style="left:1111.56px;top:727.29px;width:800.88px;height:1px;background:#e6e6e6"></div>
<div class="t" style="left:1038.33px;top:727.97px;width:60px;text-align:right;transform:translateY(-50%);font-size:11.4px;color:#444">40k</div>
<div class="a" style="left:1111.56px;top:683.88px;width:800.88px;height:1px;background:#e6e6e6"></div>
<div class="t" style="left:1038.33px;top:684.57px;width:60px;text-align:right;transform:translateY(-50%);font-size:11.4px;color:#444">50k</div>
<div class="a" style="left:1111.56px;top:640.47px;width:800.88px;height:1px;background:#e6e6e6"></div>
<div class="t" style="left:1038.33px;top:641.16px;width:60px;text-align:right;transform:translateY(-50%);font-size:11.4px;color:#444">60k</div>
<div class="a" style="left:1111.56px;top:597.06px;width:800.88px;height:1px;background:#e6e6e6"></div>
<div class="t" style="left:1038.33px;top:597.75px;width:60px;text-align:right;transform:translateY(-50%);font-size:11.4px;color:#444">70k</div>
<div class="a" style="left:1130.69px;top:898.39px;width:161.95px;height:3.02px;background:#2caffe"></div>
<div class="t" style="left:1211.67px;top:916.16px;width:200px;margin-left:-100px;text-align:center;transform:translateY(-50%);font-size:12.2px;color:#444">November</div>
<div class="t" style="left:1211.67px;top:889.7px;width:200px;margin-left:-100px;text-align:center;transform:translateY(-50%);font-size:9.8px;font-weight:bold;color:#222">500</div>
<div class="a" style="left:1330.91px;top:888.39px;width:161.95px;height:13.02px;background:#544fc5"></div>
<div class="t" style="left:1411.89px;top:916.16px;width:200px;margin-left:-100px;text-align:center;transform:translateY(-50%);font-size:12.2px;color:#444">June</div>
<div class="t" style="left:1411.89px;top:889.32px;width:200px;margin-left:-100px;text-align:center;transform:translateY(-50%);font-size:9.8px;font-weight:bold;color:#222">3000</div>
<div class="a" style="left:1531.13px;top:632.29px;width:161.95px;height:269.13px;background:#00e272"></div>
<div class="t" style="left:1612.11px;top:916.16px;width:200px;margin-left:-100px;text-align:center;transform:translateY(-50%);font-size:12.2px;color:#444">August</div>
<div class="t" style="left:1612.11px;top:645.89px;width:200px;margin-left:-100px;text-align:center;transform:translateY(-50%);font-size:9.8px;font-weight:bold;color:#222">62000</div>
<div class="a" style="left:1731.35px;top:875.2px;width:161.95px;height:26.22px;background:#fe6a35"></div>
<div class="t" style="left:1812.33px;top:916.16px;width:200px;margin-left:-100px;text-align:center;transform:translateY(-50%);font-size:12.2px;color:#444">May</div>
<div class="t" style="left:1812.33px;top:888.81px;width:200px;margin-left:-100px;text-align:center;transform:translateY(-50%);font-size:9.8px;font-weight:bold;color:#222">6040</div>
<div class="a" style="left:1111.56px;top:900.8199999999999px;width:800.88px;height:2px;background:#9a9a9a"></div>
</section>
</main>
</div></div></body></html>
